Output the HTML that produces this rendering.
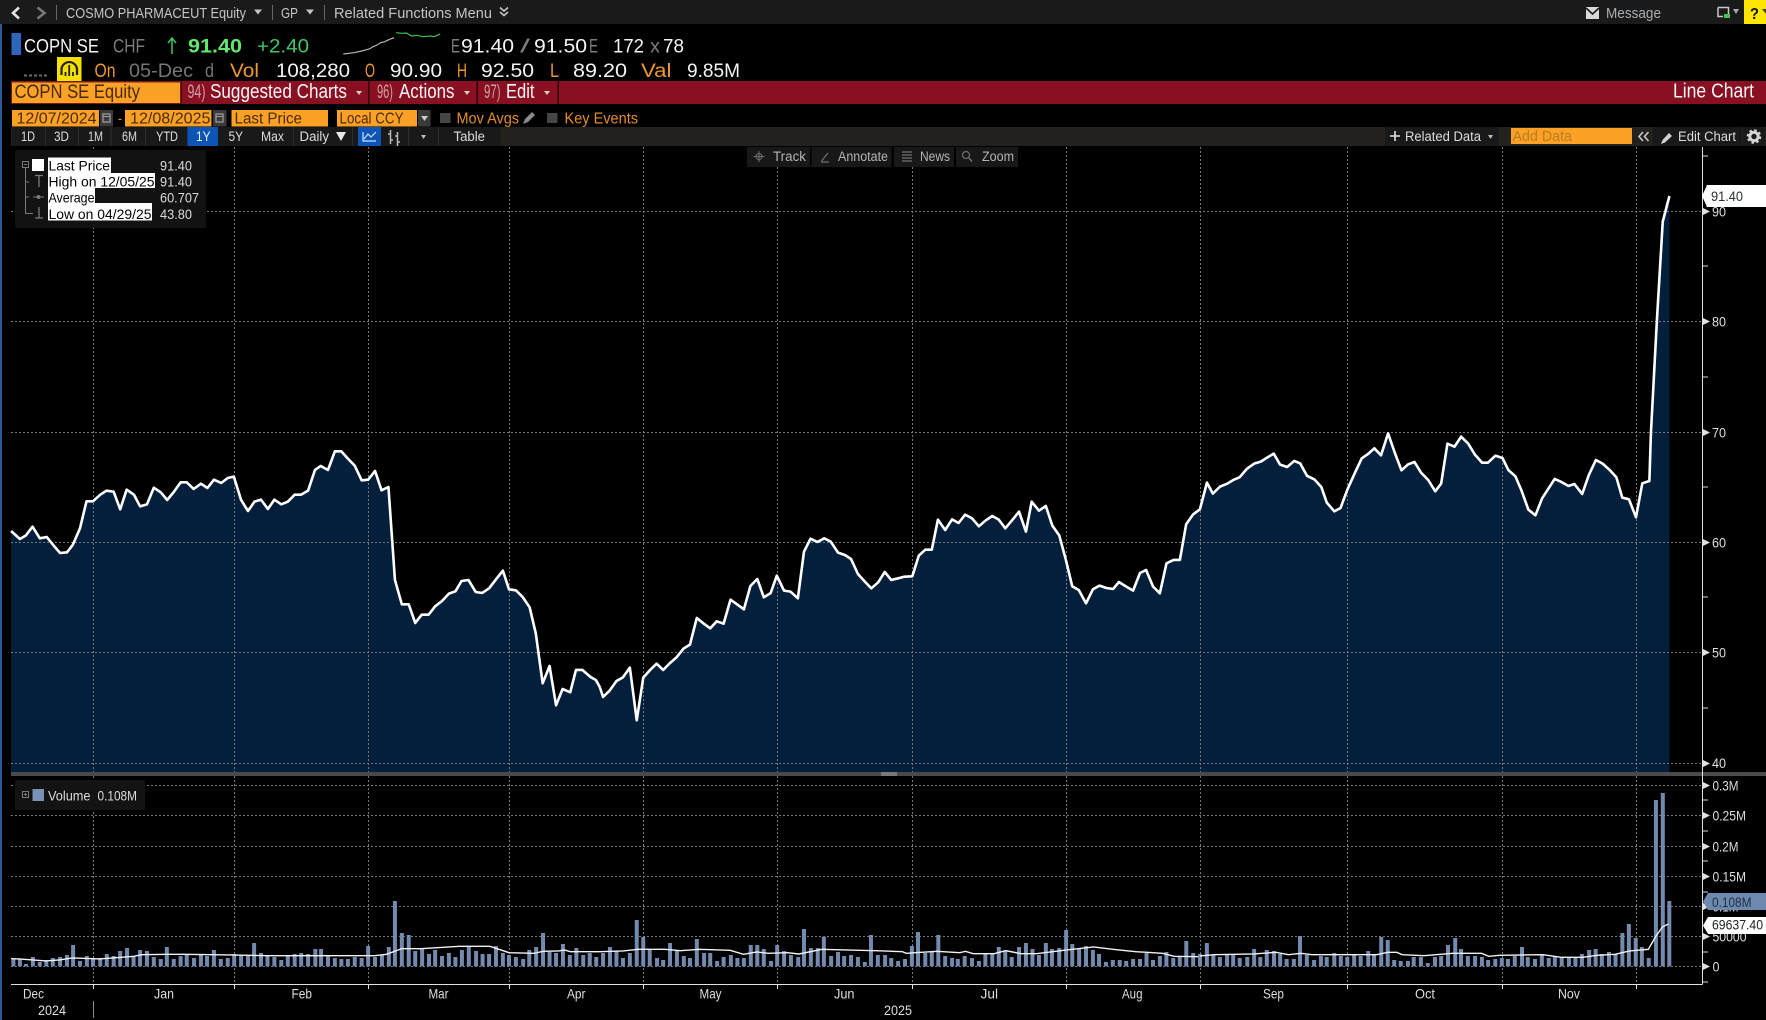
<!DOCTYPE html>
<html><head><meta charset="utf-8"><title>COPN SE Equity Line Chart</title>
<style>
html,body{margin:0;padding:0;background:#000;width:1766px;height:1020px;overflow:hidden}
svg{display:block;position:absolute;left:0;top:0}
text{font-family:"Liberation Sans",sans-serif;white-space:pre}
.b{font-size:14.5px;fill:#c4c4c4}
.r{font-size:19px;fill:#f4f4f4}
.g{fill:#808080}
.o{fill:#ee982e}
.m{font-size:20px;fill:#f6f6f6}
.c{font-size:19px;fill:#cda0a4}
.i{font-size:15.5px;fill:#4a2b00}
.t{font-size:13.5px;fill:#dcdcdc}
.f{font-size:13.5px;fill:#b4b4b4}
.a{font-size:14px;fill:#dedede}
.l{font-size:14px;fill:#000}
.v{font-size:14px;fill:#dcdcdc}
.line{fill:none;stroke:#fff;stroke-width:2.6;stroke-linejoin:round;vector-effect:non-scaling-stroke}
.avg{fill:none;stroke:#f2f2f2;stroke-width:1.4;vector-effect:non-scaling-stroke}
.bars{fill:none;stroke:#7389ae;stroke-width:4;vector-effect:non-scaling-stroke}
</style></head><body>
<svg width="1766" height="1020" viewBox="0 0 1766 1020" xmlns="http://www.w3.org/2000/svg">
<rect width="1766" height="1020" fill="#000"/>
<rect x="0" y="24" width="2" height="996" fill="#2a5a9c"/>

<!-- top bar -->
<rect width="1766" height="24" fill="#1a1a1a"/>
<path d="M19 7.500L13 13L19 18.500" fill="none" stroke="#e4e4e4" stroke-width="2.600"/>
<path d="M37.500 7.500L44.500 13L37.500 18.500" fill="none" stroke="#777" stroke-width="2.600"/>
<path d="M56.500 5V20M272.500 5V20M324.500 5V20" stroke="#666" stroke-width="1"/>
<text class="b" x="66" y="18" textLength="180" lengthAdjust="spacingAndGlyphs">COSMO PHARMACEUT Equity</text>
<polygon points="254,9.500 262,9.500 258,14.500" fill="#c4c4c4"/>
<text class="b" x="281" y="18" textLength="17" lengthAdjust="spacingAndGlyphs">GP</text>
<polygon points="306,9.500 314,9.500 310,14.500" fill="#c4c4c4"/>
<text class="b" x="334" y="18" textLength="158" lengthAdjust="spacingAndGlyphs">Related Functions Menu</text>
<path d="M500 7.500L504 11L508 7.500M500 12L504 15.500L508 12" fill="none" stroke="#c4c4c4" stroke-width="1.600"/>
<rect x="1586" y="7" width="13" height="12" fill="#d8d8d8"/><path d="M1586 8L1592.500 14L1599 8" fill="none" stroke="#1a1a1a" stroke-width="1.600"/>
<text class="b" x="1606" y="18" textLength="55" lengthAdjust="spacingAndGlyphs" style="fill:#a8afb4">Message</text>
<path d="M1718 7.500H1728.500V14M1718 7.500V16.500H1723" fill="none" stroke="#c8c8c8" stroke-width="1.500"/><rect x="1724" y="14" width="6" height="4" fill="#3cc850"/>
<polygon points="1733,9 1739,9 1736,14" fill="#aaa"/>
<rect x="1744" y="0" width="22" height="24" fill="#ffe600"/>
<text x="1750" y="19" style="font-size:16px;font-weight:bold;fill:#111" textLength="9" lengthAdjust="spacingAndGlyphs">?</text>
<polygon points="1762,9 1766,9 1766,14" fill="#444"/>

<!-- row 1 -->
<rect x="11.500" y="33" width="9.500" height="22" fill="#2c66bd"/>
<text class="r" x="24" y="52.700" textLength="75" lengthAdjust="spacingAndGlyphs">COPN SE</text>
<text class="r g" x="113" y="52.700" textLength="32" lengthAdjust="spacingAndGlyphs" style="fill:#7c7c7c">CHF</text>
<path d="M172 54V38M168 43L172 38L176 43" fill="none" stroke="#3fc964" stroke-width="1.500"/>
<text class="r" x="188" y="52.700" textLength="54" lengthAdjust="spacingAndGlyphs" style="font-weight:bold;fill:#5fe86d">91.40</text>
<text class="r" x="257" y="52.700" textLength="52" lengthAdjust="spacingAndGlyphs" style="fill:#3fc964">+2.40</text>
<polyline transform="scale(.3827 .3333)" points="897,162 925,158 945,153 965,147 975,140 985,135 995,128 1005,125 1018,118 1030,113" fill="none" stroke="#b4b4b4" stroke-width="1.200" vector-effect="non-scaling-stroke"/>
<polyline transform="scale(.3827 .3333)" points="1035,98 1050,100 1062,99 1075,108 1090,106 1105,110 1125,108 1135,110 1150,102" fill="none" stroke="#3cc850" stroke-width="1.200" vector-effect="non-scaling-stroke"/>
<text class="r" x="451" y="52.700" textLength="9" lengthAdjust="spacingAndGlyphs" style="fill:#7c7c7c">E</text>
<text class="r" x="461" y="52.700" textLength="53" lengthAdjust="spacingAndGlyphs">91.40</text>
<text class="r" x="520" y="52.700" textLength="10" lengthAdjust="spacingAndGlyphs" style="fill:#7c7c7c">/</text>
<text class="r" x="534" y="52.700" textLength="53" lengthAdjust="spacingAndGlyphs">91.50</text>
<text class="r" x="589" y="52.700" textLength="9" lengthAdjust="spacingAndGlyphs" style="fill:#7c7c7c">E</text>
<text class="r" x="613" y="52.700" textLength="31" lengthAdjust="spacingAndGlyphs">172</text>
<text class="r" x="650" y="52.700" textLength="10" lengthAdjust="spacingAndGlyphs" style="fill:#7c7c7c">x</text>
<text class="r" x="663" y="52.700" textLength="21" lengthAdjust="spacingAndGlyphs">78</text>

<!-- row 2 -->
<path d="M24 75.500H47" stroke="#6a6a6a" stroke-width="2" stroke-dasharray="3 2"/>
<rect x="57" y="57" width="24.500" height="24" fill="#f6e000"/>
<path d="M61.500 75V69A7.800 7.800 0 0 1 77 69V75" fill="none" stroke="#222" stroke-width="2.200"/>
<path d="M65.500 76V72M69.200 76V65M73 76V72" stroke="#222" stroke-width="1.800"/>
<text class="r o" x="94.500" y="77" textLength="21" lengthAdjust="spacingAndGlyphs">On</text>
<text class="r" x="129" y="77" textLength="64" lengthAdjust="spacingAndGlyphs" style="fill:#767676">05-Dec</text>
<text class="r" x="205" y="77" textLength="9" lengthAdjust="spacingAndGlyphs" style="fill:#767676">d</text>
<text class="r o" x="230" y="77" textLength="29" lengthAdjust="spacingAndGlyphs">Vol</text>
<text class="r" x="276" y="77" textLength="74" lengthAdjust="spacingAndGlyphs">108,280</text>
<text class="r o" x="365" y="77" textLength="10" lengthAdjust="spacingAndGlyphs">O</text>
<text class="r" x="390" y="77" textLength="52" lengthAdjust="spacingAndGlyphs">90.90</text>
<text class="r o" x="457" y="77" textLength="10" lengthAdjust="spacingAndGlyphs">H</text>
<text class="r" x="481" y="77" textLength="53" lengthAdjust="spacingAndGlyphs">92.50</text>
<text class="r o" x="550" y="77" textLength="9" lengthAdjust="spacingAndGlyphs">L</text>
<text class="r" x="573" y="77" textLength="54" lengthAdjust="spacingAndGlyphs">89.20</text>
<text class="r o" x="641" y="77" textLength="30.500" lengthAdjust="spacingAndGlyphs">Val</text>
<text class="r" x="687" y="77" textLength="53" lengthAdjust="spacingAndGlyphs">9.85M</text>

<!-- red bar -->
<rect x="181.500" y="81" width="1584.500" height="23" fill="#881022"/>
<rect x="11" y="81" width="170" height="23" fill="#7a1a1c"/>
<rect x="12" y="82.500" width="168" height="20.500" fill="#fba126"/>
<rect x="368" y="81" width="1.500" height="23" fill="#2a0208"/><rect x="476.500" y="81" width="1.500" height="23" fill="#2a0208"/><rect x="557.500" y="81" width="1.500" height="23" fill="#2a0208"/>
<text x="14.500" y="98" textLength="125.500" lengthAdjust="spacingAndGlyphs" style="font-size:19px;fill:#47290a">COPN SE Equity</text>
<text class="c" x="187.500" y="98" textLength="18" lengthAdjust="spacingAndGlyphs">94)</text>
<text class="m" x="210" y="98" textLength="137" lengthAdjust="spacingAndGlyphs">Suggested Charts</text>
<polygon points="356,91 362,91 359,95" fill="#dcb"/>
<text class="c" x="377" y="98" textLength="16" lengthAdjust="spacingAndGlyphs">96)</text>
<text class="m" x="399" y="98" textLength="55.500" lengthAdjust="spacingAndGlyphs">Actions</text>
<polygon points="464,91 470,91 467,95" fill="#dcb"/>
<text class="c" x="484" y="98" textLength="16.500" lengthAdjust="spacingAndGlyphs">97)</text>
<text class="m" x="506" y="98" textLength="28.500" lengthAdjust="spacingAndGlyphs">Edit</text>
<polygon points="544,91 550,91 547,95" fill="#dcb"/>
<text class="m" x="1673" y="97.700" textLength="81" lengthAdjust="spacingAndGlyphs">Line Chart</text>

<!-- date row -->
<rect x="12" y="110" width="87" height="16.500" fill="#fba126"/>
<text class="i" x="16.500" y="123.300" textLength="80" lengthAdjust="spacingAndGlyphs">12/07/2024</text>
<rect x="100" y="110" width="13" height="16.500" fill="#3a3a3a"/><rect x="103" y="114" width="7" height="8" fill="none" stroke="#9a9a9a" stroke-width="1.300"/><path d="M103 116.500H110" stroke="#9a9a9a"/>
<text x="118" y="123" style="font-size:14px;fill:#ee982e" textLength="4" lengthAdjust="spacingAndGlyphs">-</text>
<rect x="125" y="110" width="86.500" height="16.500" fill="#fba126"/>
<text class="i" x="130" y="123.300" textLength="80.500" lengthAdjust="spacingAndGlyphs">12/08/2025</text>
<rect x="213" y="110" width="13.500" height="16.500" fill="#3a3a3a"/><rect x="216" y="114" width="7" height="8" fill="none" stroke="#9a9a9a" stroke-width="1.300"/><path d="M216 116.500H223" stroke="#9a9a9a"/>
<rect x="231.500" y="110" width="96.500" height="16.500" fill="#fba126"/>
<text class="i" x="234.500" y="123.300" textLength="67.500" lengthAdjust="spacingAndGlyphs">Last Price</text>
<rect x="337" y="110" width="80" height="16.500" fill="#fba126"/>
<text class="i" x="339.500" y="123.300" textLength="64" lengthAdjust="spacingAndGlyphs">Local CCY</text>
<rect x="418" y="110" width="12.500" height="16.500" fill="#3a3a3a"/><polygon points="421,116 428,116 424.500,121" fill="#ccc"/>
<rect x="440" y="113" width="10.500" height="10" fill="#454545"/>
<text class="i" x="456.500" y="123.300" textLength="62.500" lengthAdjust="spacingAndGlyphs" style="fill:#e28d27">Mov Avgs</text>
<path d="M523 124L525 119L532 112L535 115L528 122Z" fill="#8a8a8a"/>
<rect x="547" y="113" width="10.500" height="10" fill="#454545"/>
<text class="i" x="564.500" y="123.300" textLength="73.500" lengthAdjust="spacingAndGlyphs" style="fill:#e28d27">Key Events</text>

<!-- toolbar -->
<rect x="11" y="127" width="1755" height="19" fill="#22211e"/>
<rect x="12" y="127" width="488.500" height="19" fill="#191919"/>
<path d="M45.500 127V146M78.500 127V146M111 127V146M145.500 127V146M293.500 127V146M352.500 127V146M408.500 127V146M438.500 127V146" stroke="#2d2d2d"/>
<rect x="187.500" y="127" width="30.500" height="19" fill="#0c55b6"/>
<rect x="358" y="127" width="23" height="19" fill="#0c55b6"/>
<text class="t" x="21" y="141" textLength="14" lengthAdjust="spacingAndGlyphs">1D</text>
<text class="t" x="54" y="141" textLength="15" lengthAdjust="spacingAndGlyphs">3D</text>
<text class="t" x="88" y="141" textLength="15" lengthAdjust="spacingAndGlyphs">1M</text>
<text class="t" x="122" y="141" textLength="15" lengthAdjust="spacingAndGlyphs">6M</text>
<text class="t" x="156" y="141" textLength="22" lengthAdjust="spacingAndGlyphs">YTD</text>
<text class="t" x="196" y="141" textLength="14.500" lengthAdjust="spacingAndGlyphs" style="fill:#eef">1Y</text>
<text class="t" x="228.500" y="141" textLength="14.500" lengthAdjust="spacingAndGlyphs">5Y</text>
<text class="t" x="261" y="141" textLength="23" lengthAdjust="spacingAndGlyphs">Max</text>
<text class="t" x="299.500" y="141" textLength="29.500" lengthAdjust="spacingAndGlyphs">Daily</text>
<polygon points="336,132 346,132 341,141" fill="#e8e8e8"/>
<path d="M363 132V141H376M364 139L368 134L371 137L376 132" fill="none" stroke="#cfe0ff" stroke-width="1.200"/>
<path d="M390.500 130V144M397.500 132V146M388 134H390.500M390.500 140H393M395 136H397.500M397.500 142H400" fill="none" stroke="#bbb" stroke-width="1.500"/>
<polygon points="421,135 426,135 423.500,139" fill="#bbb"/>
<text class="t" x="453.500" y="141" textLength="31.500" lengthAdjust="spacingAndGlyphs">Table</text>
<rect x="1385" y="127" width="114" height="19" fill="#191919"/>
<path d="M1395 131V141M1390 136H1400" stroke="#e4e4e4" stroke-width="1.600"/>
<text class="t" x="1405" y="141" textLength="76" lengthAdjust="spacingAndGlyphs">Related Data</text>
<polygon points="1488,135 1493,135 1490.500,139" fill="#bbb"/>
<rect x="1511" y="128" width="121" height="16" fill="#fba126"/>
<text x="1512.500" y="141" textLength="59.500" lengthAdjust="spacingAndGlyphs" style="font-size:14.500px;fill:#b97c24">Add Data</text>
<path d="M1643 132L1639 136.500L1643 141M1648.500 132L1644.500 136.500L1648.500 141" fill="none" stroke="#c8c8c8" stroke-width="1.600"/>
<rect x="1653" y="127" width="89" height="19" fill="#191919"/><rect x="1743" y="127" width="22" height="19" fill="#191919"/>
<path d="M1661 144L1662.500 140L1669 133L1672 136L1665 142.500Z" fill="#d0d0d0"/>
<text class="t" x="1678" y="141" textLength="58" lengthAdjust="spacingAndGlyphs">Edit Chart</text>
<circle cx="1754" cy="136.500" r="4.200" fill="none" stroke="#d4d4d4" stroke-width="3"/><circle cx="1754" cy="136.500" r="6.300" fill="none" stroke="#d4d4d4" stroke-width="2" stroke-dasharray="2.500 2.450"/>

<!-- fills -->
<g transform="matrix(.3827 0 0 .3333 0 420)"><polygon fill="#041f3c" points="29,1056 29,333 52,357 67,347 85,320 104,355 122,351 139,375 157,399 175,397 190,375 209,325 226,244 243,244 262,224 278,212 297,215 314,268 331,209 350,224 366,259 384,253 402,203 420,217 437,240 454,216 472,187 488,187 506,207 525,191 542,204 559,179 578,189 595,174 611,170 630,240 648,273 665,245 682,239 700,267 717,239 735,253 752,245 770,224 787,224 805,212 823,150 838,138 857,150 875,94 892,94 910,117 927,137 945,181 962,179 980,153 997,211 1015,201 1032,480 1050,553 1068,553 1085,609 1102,584 1120,584 1137,559 1155,543 1173,521 1190,514 1206,483 1224,480 1243,516 1260,519 1278,505 1296,478 1314,452 1330,508 1348,511 1365,530 1384,562 1400,640 1418,790 1436,738 1453,856 1470,807 1490,817 1505,750 1522,750 1543,771 1557,780 1568,803 1568,1056"/></g>
<g transform="matrix(.3827 0 0 .3333 600 420)"><polygon fill="#041f3c" points="0,1056 0,803 8,831 25,812 43,783 60,772 78,743 96,901 113,773 131,750 148,731 165,750 183,729 200,712 218,686 235,674 253,594 270,610 288,625 305,604 323,611 341,539 358,553 376,568 393,498 411,477 428,532 446,519 462,467 481,512 498,515 517,535 533,395 550,356 568,366 586,355 603,365 622,398 640,405 656,417 674,462 692,485 709,505 727,487 744,456 761,480 779,475 796,470 816,469 833,407 850,389 867,389 883,299 902,330 920,298 937,309 954,284 972,295 990,319 1008,301 1025,288 1042,299 1059,325 1078,299 1095,275 1113,335 1128,245 1147,272 1165,258 1182,317 1200,346 1217,418 1234,499 1251,510 1270,550 1288,508 1305,497 1323,504 1341,507 1356,486 1375,500 1393,512 1411,459 1427,450 1446,502 1446,1056"/></g>
<g transform="matrix(.3929 0 0 .3333 1150 180)"><polygon fill="#041f3c" points="6,1776 6,1215 8,1220 25,1240 42,1150 60,1140 76,1140 92,1033 110,1003 127,988 145,908 160,941 178,920 195,912 212,900 228,892 247,866 265,851 282,845 298,833 315,821 331,854 349,861 367,843 382,850 400,888 418,898 436,921 450,968 469,994 485,984 503,927 521,880 539,835 555,822 571,805 588,826 606,760 622,815 640,871 657,853 673,846 690,878 708,900 726,934 741,911 757,791 775,800 792,770 810,791 827,824 845,848 860,848 879,827 897,834 912,870 930,889 945,930 963,989 981,1006 998,955 1030,897 1047,906 1065,918 1080,912 1100,942 1117,885 1135,840 1152,851 1170,870 1187,892 1202,953 1219,958 1237,1012 1253,910 1271,903 1275,757 1290,424 1305,125 1322,48 1322,1776"/></g>

<!-- grid -->
<path d="M11 211.500H1702M11 321.500H1702M11 432.500H1702M11 542.500H1702M11 652.500H1702M11 763.500H1702M11 785.500H1702M11 815.500H1702M11 846.500H1702M11 876.500H1702M11 906.500H1702M11 936.500H1702M11 966.500H1702" fill="none" stroke="#74797e" stroke-dasharray="2 2"/>
<path d="M93.500 147V772M234.500 147V772M368.500 147V772M509.500 147V772M643.500 147V772M777.500 147V772M912.500 147V772M1066.500 147V772M1200.500 147V772M1347.500 147V772M1502.500 147V772M1636.500 147V772M93.500 776V984M234.500 776V984M368.500 776V984M509.500 776V984M643.500 776V984M777.500 776V984M912.500 776V984M1066.500 776V984M1200.500 776V984M1347.500 776V984M1502.500 776V984M1636.500 776V984" fill="none" stroke="#74797e" stroke-dasharray="2 2"/>

<!-- price line -->
<g transform="matrix(.3827 0 0 .3333 0 420)"><polyline class="line" points="29,333 52,357 67,347 85,320 104,355 122,351 139,375 157,399 175,397 190,375 209,325 226,244 243,244 262,224 278,212 297,215 314,268 331,209 350,224 366,259 384,253 402,203 420,217 437,240 454,216 472,187 488,187 506,207 525,191 542,204 559,179 578,189 595,174 611,170 630,240 648,273 665,245 682,239 700,267 717,239 735,253 752,245 770,224 787,224 805,212 823,150 838,138 857,150 875,94 892,94 910,117 927,137 945,181 962,179 980,153 997,211 1015,201 1032,480 1050,553 1068,553 1085,609 1102,584 1120,584 1137,559 1155,543 1173,521 1190,514 1206,483 1224,480 1243,516 1260,519 1278,505 1296,478 1314,452 1330,508 1348,511 1365,530 1384,562 1400,640 1418,790 1436,738 1453,856 1470,807 1490,817 1505,750 1522,750 1543,771 1557,780 1568,803"/></g>
<g transform="matrix(.3827 0 0 .3333 600 420)"><polyline class="line" points="0,803 8,831 25,812 43,783 60,772 78,743 96,901 113,773 131,750 148,731 165,750 183,729 200,712 218,686 235,674 253,594 270,610 288,625 305,604 323,611 341,539 358,553 376,568 393,498 411,477 428,532 446,519 462,467 481,512 498,515 517,535 533,395 550,356 568,366 586,355 603,365 622,398 640,405 656,417 674,462 692,485 709,505 727,487 744,456 761,480 779,475 796,470 816,469 833,407 850,389 867,389 883,299 902,330 920,298 937,309 954,284 972,295 990,319 1008,301 1025,288 1042,299 1059,325 1078,299 1095,275 1113,335 1128,245 1147,272 1165,258 1182,317 1200,346 1217,418 1234,499 1251,510 1270,550 1288,508 1305,497 1323,504 1341,507 1356,486 1375,500 1393,512 1411,459 1427,450 1446,502"/></g>
<g transform="matrix(.3929 0 0 .3333 1150 180)"><polyline class="line" points="8,1220 25,1240 42,1150 60,1140 76,1140 92,1033 110,1003 127,988 145,908 160,941 178,920 195,912 212,900 228,892 247,866 265,851 282,845 298,833 315,821 331,854 349,861 367,843 382,850 400,888 418,898 436,921 450,968 469,994 485,984 503,927 521,880 539,835 555,822 571,805 588,826 606,760 622,815 640,871 657,853 673,846 690,878 708,900 726,934 741,911 757,791 775,800 792,770 810,791 827,824 845,848 860,848 879,827 897,834 912,870 930,889 945,930 963,989 981,1006 998,955 1030,897 1047,906 1065,918 1080,912 1100,942 1117,885 1135,840 1152,851 1170,870 1187,892 1202,953 1219,958 1237,1012 1253,910 1271,903 1275,757 1290,424 1305,125 1322,48"/></g>

<!-- separator -->
<rect x="11" y="772" width="1755" height="4" fill="#4a4a4a"/>
<path d="M881 773H897M881 775H897" stroke="#a8a8a8"/>

<!-- volume bars -->
<g transform="matrix(.3827 0 0 .3333 0 760)"><path class="bars" d="M35 619V597M52 619V597M68 619V612M86 619V591M104 619V606M121 619V600M138 619V594M157 619V591M175 619V585M191 619V555M209 619V603M227 619V588M243 619V594M262 619V594M279 619V582M297 619V588M314 619V573M332 619V564M349 619V588M366 619V570M384 619V573M402 619V591M420 619V597M436 619V561M454 619V597M472 619V588M488 619V584M507 619V594M525 619V585M541 619V588M559 619V570M577 619V597M595 619V594M612 619V582M630 619V585M648 619V588M664 619V549M682 619V579M699 619V585M717 619V591M735 619V600M752 619V588M770 619V582M787 619V579M805 619V582M824 619V567M839 619V567M857 619V588M875 619V594M892 619V597M909 619V597M927 619V591M945 619V594M962 619V558M980 619V591M998 619V585M1016 619V561M1032 619V423M1050 619V519M1068 619V525M1085 619V573M1103 619V567M1121 619V582M1137 619V570M1155 619V588M1173 619V579M1190 619V591M1207 619V570M1225 619V561M1244 619V573M1261 619V582M1278 619V582M1296 619V558M1314 619V579M1330 619V585M1348 619V591M1367 619V597M1383 619V570M1401 619V561M1419 619V519M1436 619V576M1453 619V579M1471 619V552M1489 619V585M1506 619V564M1524 619V585M1541 619V579M1558 619V591"/>
<polyline class="avg" points="29,596 50,597 120,603 155,600 190,594 260,597 350,589 370,584 440,583 480,583 600,585 700,587 980,587 1010,583 1050,566 1100,566 1200,559 1280,559 1330,578 1395,580 1420,574 1460,573 1475,570 1490,575 1568,575"/></g>
<g transform="matrix(.3827 0 0 .3333 600 760)"><path class="bars" d="M8 619V579M26 619V561M43 619V573M60 619V594M78 619V579M96 619V480M113 619V531M130 619V570M149 619V594M165 619V600M183 619V549M201 619V573M219 619V588M235 619V594M253 619V537M272 619V579M288 619V579M306 619V603M323 619V591M342 619V585M359 619V594M376 619V594M394 619V555M411 619V555M428 619V567M447 619V603M463 619V555M481 619V573M499 619V585M518 619V591M533 619V507M551 619V564M569 619V564M585 619V531M604 619V588M622 619V576M638 619V588M656 619V585M674 619V591M692 619V606M708 619V525M726 619V585M745 619V585M761 619V594M779 619V603M797 619V597M815 619V558M831 619V516M850 619V579M867 619V573M884 619V525M902 619V588M920 619V594M935 619V597M953 619V588M972 619V594M990 619V603M1007 619V582M1025 619V582M1042 619V561M1059 619V573M1076 619V591M1095 619V561M1113 619V549M1130 619V567M1147 619V585M1165 619V549M1181 619V567M1200 619V564M1218 619V510M1234 619V552M1252 619V567M1270 619V558M1288 619V570M1304 619V582M1322 619V606M1340 619V600M1358 619V600M1375 619V603M1393 619V597M1411 619V597M1428 619V579M1445 619V600M1463 619V588M1480 619V576M1498 619V594M1515 619V588M1532 619V543M1550 619V579"/>
<polyline class="avg" points="0,575 60,573 100,568 170,568 210,572 260,568 340,571 375,583 410,576 440,580 490,578 520,582 580,568 640,570 720,572 790,575 800,580 880,574 940,578 955,574 975,581 1030,581 1060,572 1100,581 1140,581 1220,570 1290,561 1340,568 1400,575 1470,580 1500,589 1568,590"/></g>
<g transform="matrix(.361 0 0 .3333 1200 760)"><path class="bars" d="M0 619V582M19 619V549M37 619V585M55 619V591M75 619V585M92 619V585M110 619V594M131 619V591M150 619V567M167 619V591M185 619V570M205 619V573M222 619V582M240 619V597M260 619V597M277 619V528M296 619V585M316 619V600M335 619V588M351 619V591M372 619V579M390 619V588M408 619V591M427 619V585M445 619V588M466 619V573M482 619V585M502 619V531M520 619V540M538 619V600M556 619V603M576 619V603M592 619V591M612 619V591M631 619V609M651 619V591M668 619V588M687 619V555M707 619V534M723 619V567M742 619V588M762 619V588M781 619V591M798 619V600M818 619V597M836 619V594M853 619V597M872 619V588M892 619V561M908 619V591M928 619V597M947 619V585M966 619V594M983 619V588M1002 619V594M1022 619V594M1040 619V594M1058 619V582M1078 619V570M1096 619V567M1113 619V582M1133 619V576M1151 619V582M1170 619V519M1188 619V492M1207 619V534M1224 619V561M1243 619V594M1263 619V120M1282 619V99M1300 619V423"/>
<polyline class="avg" points="0,588 40,584 150,582 210,577 245,584 280,580 310,584 490,584 520,577 545,577 560,584 620,587 700,580 780,580 800,589 830,586 950,584 1000,592 1060,592 1100,586 1150,583 1190,573 1242,568 1262,530 1282,500 1298,492"/></g>

<!-- bottom axis -->
<path d="M11 984.500H1702.500M1702.500 147V984.500" fill="none" stroke="#e0e0e0"/>
<path d="M93.500 985V989M234.500 985V989M368.500 985V989M509.500 985V989M643.500 985V989M777.500 985V989M912.500 985V989M1066.500 985V989M1200.500 985V989M1347.500 985V989M1502.500 985V989M1636.500 985V989" stroke="#e0e0e0"/>
<path d="M93.500 1001V1018" stroke="#8a8a8a"/>
<text class="a" x="23" y="998.700" textLength="21" lengthAdjust="spacingAndGlyphs">Dec</text>
<text class="a" x="154" y="998.700" textLength="20" lengthAdjust="spacingAndGlyphs">Jan</text>
<text class="a" x="291.500" y="998.700" textLength="20.500" lengthAdjust="spacingAndGlyphs">Feb</text>
<text class="a" x="428.500" y="998.700" textLength="20" lengthAdjust="spacingAndGlyphs">Mar</text>
<text class="a" x="567" y="998.700" textLength="18.500" lengthAdjust="spacingAndGlyphs">Apr</text>
<text class="a" x="699.500" y="998.700" textLength="22" lengthAdjust="spacingAndGlyphs">May</text>
<text class="a" x="834" y="998.700" textLength="20.500" lengthAdjust="spacingAndGlyphs">Jun</text>
<text class="a" x="980.500" y="998.700" textLength="17.500" lengthAdjust="spacingAndGlyphs">Jul</text>
<text class="a" x="1122" y="998.700" textLength="20.500" lengthAdjust="spacingAndGlyphs">Aug</text>
<text class="a" x="1263" y="998.700" textLength="21" lengthAdjust="spacingAndGlyphs">Sep</text>
<text class="a" x="1415" y="998.700" textLength="20" lengthAdjust="spacingAndGlyphs">Oct</text>
<text class="a" x="1558" y="998.700" textLength="22" lengthAdjust="spacingAndGlyphs">Nov</text>
<text class="a" x="38" y="1015" textLength="28" lengthAdjust="spacingAndGlyphs">2024</text>
<text class="a" x="884" y="1015" textLength="28" lengthAdjust="spacingAndGlyphs">2025</text>

<!-- y axis ticks -->
<path d="M1703 156H1708M1703 266H1708M1703 377H1708M1703 487H1708M1703 597H1708M1703 708H1708M1703 800H1708M1703 831H1708M1703 861H1708M1703 892H1708M1703 952H1708M1703 982H1708" stroke="#d8d8d8"/>
<path d="M1703 208L1710 211.500L1703 215ZM1703 318L1710 321.500L1703 325ZM1703 429L1710 432.500L1703 436ZM1703 539L1710 542.500L1703 546ZM1703 649L1710 652.500L1703 656ZM1703 760L1710 763.500L1703 767ZM1703 782L1710 785.500L1703 789ZM1703 812L1710 815.500L1703 819ZM1703 843L1710 846.500L1703 850ZM1703 873L1710 876.500L1703 880ZM1703 903L1710 906.500L1703 910ZM1703 933L1710 936.500L1703 940ZM1703 963L1710 966.500L1703 970Z" fill="#e0e0e0"/>
<text class="a" x="1712" y="216.700" textLength="14" lengthAdjust="spacingAndGlyphs">90</text>
<text class="a" x="1712" y="326.700" textLength="14" lengthAdjust="spacingAndGlyphs">80</text>
<text class="a" x="1712" y="437.700" textLength="14" lengthAdjust="spacingAndGlyphs">70</text>
<text class="a" x="1712" y="547.500" textLength="14" lengthAdjust="spacingAndGlyphs">60</text>
<text class="a" x="1712" y="657.500" textLength="14" lengthAdjust="spacingAndGlyphs">50</text>
<text class="a" x="1712" y="768" textLength="14" lengthAdjust="spacingAndGlyphs">40</text>
<text class="a" x="1712.500" y="790.700" textLength="26" lengthAdjust="spacingAndGlyphs">0.3M</text>
<text class="a" x="1712.500" y="820.700" textLength="33.500" lengthAdjust="spacingAndGlyphs">0.25M</text>
<text class="a" x="1712.500" y="851.700" textLength="26" lengthAdjust="spacingAndGlyphs">0.2M</text>
<text class="a" x="1712.500" y="881.700" textLength="33.500" lengthAdjust="spacingAndGlyphs">0.15M</text>
<text class="a" x="1712.500" y="911.700" textLength="26" lengthAdjust="spacingAndGlyphs">0.1M</text>
<text class="a" x="1712.500" y="941.700" textLength="34" lengthAdjust="spacingAndGlyphs">50000</text>
<text class="a" x="1712.500" y="971.700" textLength="7" lengthAdjust="spacingAndGlyphs">0</text>

<!-- value tags -->
<path d="M1702 196L1707 185H1766V207H1707Z" fill="#fff"/>
<text x="1711" y="201" textLength="32" lengthAdjust="spacingAndGlyphs" style="font-size:14px;fill:#2a2f36">91.40</text>
<path d="M1703 901.500L1708 893H1766V910H1708Z" fill="#6d89b0"/>
<text x="1712" y="907" textLength="39.500" lengthAdjust="spacingAndGlyphs" style="font-size:14px;fill:#1f2d44">0.108M</text>
<path d="M1703 925.500L1708 917H1766V934H1708Z" fill="#fff"/>
<text x="1712" y="929.500" textLength="51" lengthAdjust="spacingAndGlyphs" style="font-size:14px;fill:#20242a">69637.40</text>

<!-- chart tool buttons -->
<rect x="747" y="147" width="63" height="20" fill="#181818"/>
<rect x="811.500" y="147" width="80" height="20" fill="#181818"/>
<rect x="894" y="147" width="60" height="20" fill="#181818"/>
<rect x="956" y="147" width="62" height="20" fill="#181818"/>
<circle cx="759" cy="156.500" r="3" fill="none" stroke="#707070"/><path d="M753.500 156.500H764.500M759 151V162" stroke="#707070"/>
<path d="M821 162H829M821.500 161L828 153" fill="none" stroke="#707070" stroke-width="1.200"/>
<path d="M902 152H912M902 155H912M902 158H912M902 161H912" stroke="#707070" stroke-width="1.200"/>
<circle cx="966" cy="155" r="3.500" fill="none" stroke="#707070" stroke-width="1.200"/><path d="M969 158L972 161.500" stroke="#707070" stroke-width="1.500"/>
<text class="f" x="773" y="161" textLength="33" lengthAdjust="spacingAndGlyphs">Track</text>
<text class="f" x="838" y="161" textLength="50" lengthAdjust="spacingAndGlyphs">Annotate</text>
<text class="f" x="920" y="161" textLength="30" lengthAdjust="spacingAndGlyphs">News</text>
<text class="f" x="982" y="161" textLength="32" lengthAdjust="spacingAndGlyphs">Zoom</text>

<!-- price legend -->
<rect x="15" y="150" width="191" height="78" fill="#131313" fill-opacity=".94" rx="2"/>
<rect x="32" y="159" width="12" height="12" fill="#fff"/>
<rect x="48" y="157.500" width="63" height="15.500" fill="#fff"/>
<rect x="48" y="173" width="107" height="15" fill="#fff"/>
<rect x="48" y="188" width="47" height="15" fill="#fff"/>
<rect x="48" y="203" width="104" height="17.500" fill="#fff"/>
<text class="l" x="48.500" y="170.700" textLength="61.500" lengthAdjust="spacingAndGlyphs">Last Price</text>
<text class="l" x="48.500" y="186.700" textLength="106" lengthAdjust="spacingAndGlyphs">High on 12/05/25</text>
<text class="l" x="48.500" y="202.700" textLength="46" lengthAdjust="spacingAndGlyphs">Average</text>
<text class="l" x="48.500" y="219" textLength="103" lengthAdjust="spacingAndGlyphs">Low on 04/29/25</text>
<text class="v" x="160" y="170.700" textLength="32" lengthAdjust="spacingAndGlyphs">91.40</text>
<text class="v" x="160" y="186.700" textLength="32" lengthAdjust="spacingAndGlyphs">91.40</text>
<text class="v" x="160" y="202.700" textLength="39" lengthAdjust="spacingAndGlyphs">60.707</text>
<text class="v" x="160" y="219" textLength="32" lengthAdjust="spacingAndGlyphs">43.80</text>
<rect x="22.500" y="161.500" width="6" height="6" fill="none" stroke="#7a7a7a"/><path d="M24 164.500H27" stroke="#7a7a7a"/>
<path d="M25.500 168V213.500H33M25.500 182H29M25.500 197H29" fill="none" stroke="#7a7a7a"/>
<path d="M35 175.500H43M39 175.500V187" fill="none" stroke="#7a7a7a" stroke-width="1.300"/>
<path d="M33 197H44" stroke="#7a7a7a"/><circle cx="38.500" cy="197" r="2" fill="#7a7a7a"/>
<path d="M35 218H43M39 207V218" fill="none" stroke="#7a7a7a" stroke-width="1.300"/>

<!-- volume legend -->
<rect x="15" y="780" width="130" height="30" fill="#131313" rx="2"/>
<rect x="22.500" y="791.500" width="6" height="6" fill="none" stroke="#7a7a7a"/><path d="M24 794.500H27M25.500 793V796" stroke="#7a7a7a"/>
<rect x="32.500" y="789" width="11.500" height="12" fill="#7a91b6"/>
<text class="v" x="48" y="800.700" textLength="42.500" lengthAdjust="spacingAndGlyphs">Volume</text>
<text class="v" x="97.500" y="800.700" textLength="39.500" lengthAdjust="spacingAndGlyphs">0.108M</text>
</svg>
</body></html>
